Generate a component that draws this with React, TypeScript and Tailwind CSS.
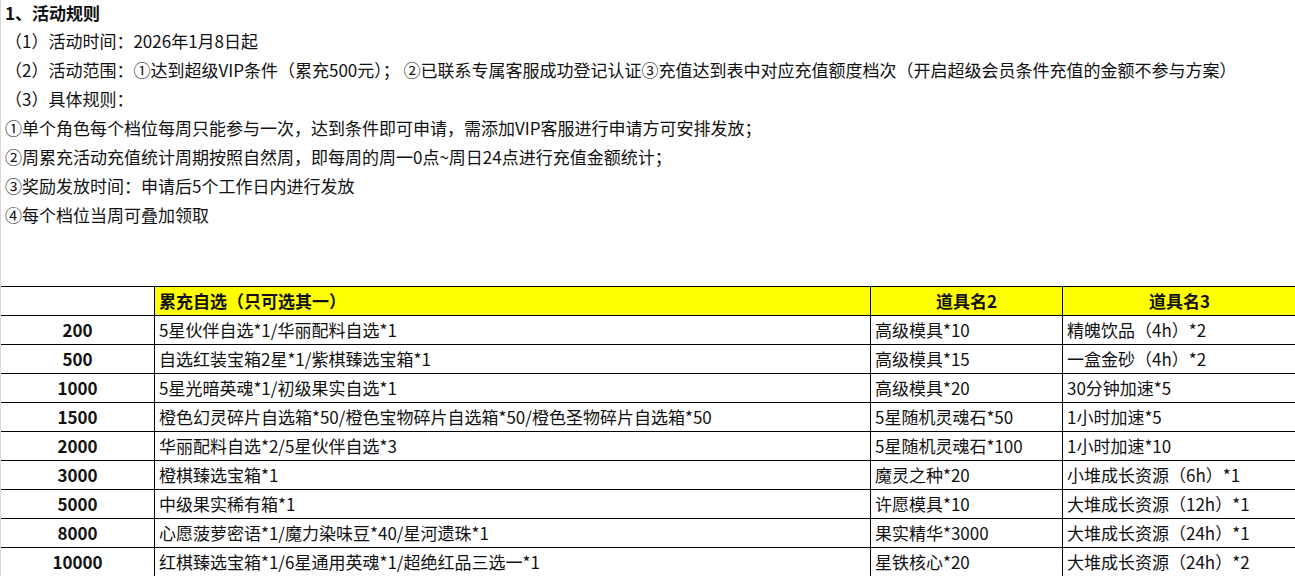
const rules = [
  '（1）活动时间：2026年1月8日起',
  '（2）活动范围：①达到超级VIP条件（累充500元）； ②已联系专属客服成功登记认证③充值达到表中对应充值额度档次（开启超级会员条件充值的金额不参与方案）',
  '（3）具体规则：',
  '①单个角色每个档位每周只能参与一次，达到条件即可申请，需添加VIP客服进行申请方可安排发放；',
  '②周累充活动充值统计周期按照自然周，即每周的周一0点~周日24点进行充值金额统计；',
  '③奖励发放时间：申请后5个工作日内进行发放',
  '④每个档位当周可叠加领取',
];

const rows = [
  ['200', '5星伙伴自选*1/华丽配料自选*1', '高级模具*10', '精魄饮品（4h）*2'],
  ['500', '自选红装宝箱2星*1/紫棋臻选宝箱*1', '高级模具*15', '一盒金砂（4h）*2'],
  ['1000', '5星光暗英魂*1/初级果实自选*1', '高级模具*20', '30分钟加速*5'],
  ['1500', '橙色幻灵碎片自选箱*50/橙色宝物碎片自选箱*50/橙色圣物碎片自选箱*50', '5星随机灵魂石*50', '1小时加速*5'],
  ['2000', '华丽配料自选*2/5星伙伴自选*3', '5星随机灵魂石*100', '1小时加速*10'],
  ['3000', '橙棋臻选宝箱*1', '魔灵之种*20', '小堆成长资源（6h）*1'],
  ['5000', '中级果实稀有箱*1', '许愿模具*10', '大堆成长资源（12h）*1'],
  ['8000', '心愿菠萝密语*1/魔力染味豆*40/星河遗珠*1', '果实精华*3000', '大堆成长资源（24h）*1'],
  ['10000', '红棋臻选宝箱*1/6星通用英魂*1/超绝红品三选一*1', '星铁核心*20', '大堆成长资源（24h）*2'],
];

const cell = 'h-[29px] flex items-center border-b border-r border-black whitespace-pre overflow-hidden';

export default function App() {
  return (
    <div
      className="w-[1295px] h-[576px] overflow-hidden bg-white border-l border-[#d9d9d9] text-[17px] text-[#111]"
      style={{ fontFamily: '"Noto Sans CJK SC", "Noto Sans", sans-serif' }}
    >
      {/* rules text */}
      <div className="h-[286px] pl-[4px]">
        <div className="h-[26px] flex items-center font-bold">1、活动规则</div>
        {rules.map((r) => (
          <div key={r} className="h-[29px] flex items-center whitespace-pre">
            {r}
          </div>
        ))}
      </div>

      {/* table */}
      <div className="w-[1310px] border-t border-black grid grid-cols-[154px_716px_192px_248px]">
        <div className={cell} />
        <div className={`${cell} bg-[#ffff00] font-bold pl-[4px]`}>累充自选（只可选其一）</div>
        <div className={`${cell} bg-[#ffff00] font-bold justify-center`}>道具名2</div>
        <div className={`${cell} bg-[#ffff00] font-bold justify-center pr-[14px]`}>道具名3</div>
        {rows.map((r) => (
          <div key={r[0]} className="contents">
            <div className={`${cell} justify-center font-bold`}>{r[0]}</div>
            <div className={`${cell} pl-[4px]`}>{r[1]}</div>
            <div className={`${cell} pl-[4px]`}>{r[2]}</div>
            <div className={`${cell} pl-[4px]`}>{r[3]}</div>
          </div>
        ))}
      </div>
    </div>
  );
}
